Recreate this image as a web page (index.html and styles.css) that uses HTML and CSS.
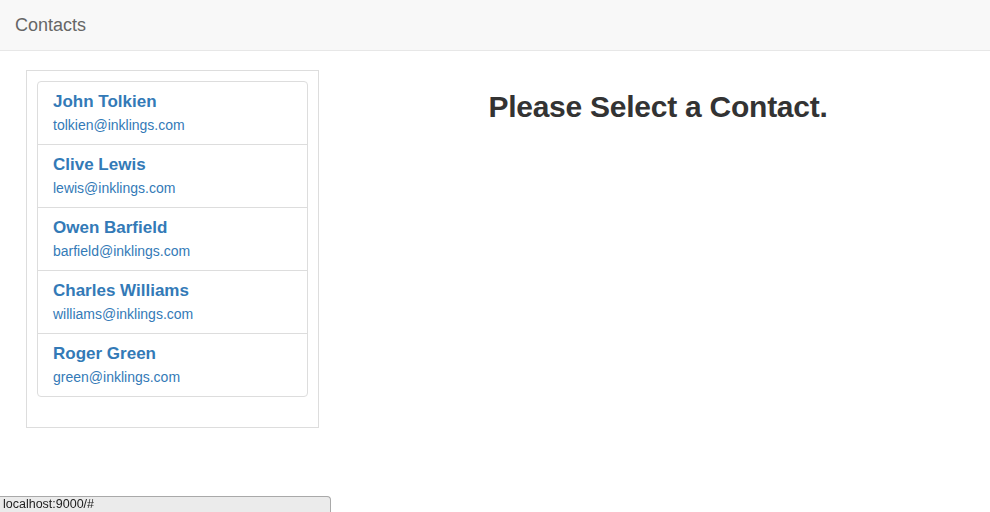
FILE: index.html
```html
<!DOCTYPE html>
<html>
<head>
<meta charset="utf-8">
<title>Contacts</title>
<link rel="stylesheet" href="styles.css">
</head>
<body>
<nav class="navbar">
  <a class="brand" href="#">Contacts</a>
</nav>
<div class="layout">
  <aside class="sidebar">
    <div class="list-group">
      <a class="list-item" href="#"><div class="name">John Tolkien</div><div class="email">tolkien@inklings.com</div></a>
      <a class="list-item" href="#"><div class="name">Clive Lewis</div><div class="email">lewis@inklings.com</div></a>
      <a class="list-item" href="#"><div class="name">Owen Barfield</div><div class="email">barfield@inklings.com</div></a>
      <a class="list-item" href="#"><div class="name">Charles Williams</div><div class="email">williams@inklings.com</div></a>
      <a class="list-item" href="#"><div class="name">Roger Green</div><div class="email">green@inklings.com</div></a>
    </div>
  </aside>
  <main class="main">
    <h2 class="title">Please Select a Contact.</h2>
  </main>
</div>
<div class="status">localhost:9000/#</div>
</body>
</html>
```
FILE: styles.css
```css
* { box-sizing: border-box; }
html, body { margin: 0; padding: 0; }
body {
  font-family: "Liberation Sans", Arial, sans-serif;
  font-size: 14px;
  line-height: 20px;
  color: #333;
  background: #fff;
}
.navbar {
  height: 51px;
  background: #f8f8f8;
  border-bottom: 1px solid #e7e7e7;
  display: flex;
  align-items: flex-start;
}
.brand {
  display: block;
  padding: 15px 15px;
  font-size: 18px;
  line-height: 20px;
  color: #666;
  text-decoration: none;
}
.layout {
  display: flex;
  align-items: flex-start;
  padding-top: 19px;
}
.sidebar {
  margin-left: 26px;
  width: 293px;
  border: 1px solid #ddd;
  padding: 10px 10px 30px 10px;
}
.list-group {
  border: 1px solid #ddd;
  border-radius: 4px;
  display: flex;
  flex-direction: column;
}
.list-item {
  display: block;
  padding: 10px 15px 9px 15px;
  border-top: 1px solid #ddd;
  text-decoration: none;
  color: #337ab7;
}
.list-item:first-child { border-top: 0; }
.name {
  font-size: 17px;
  font-weight: bold;
  line-height: 20px;
  margin-bottom: 3px;
}
.email {
  font-size: 14px;
  line-height: 20px;
}
.main {
  flex: 1;
  padding-left: 7px;
  text-align: center;
}
.title {
  margin: 20px 0 10px;
  font-size: 30px;
  font-weight: bold;
  line-height: 33px;
  letter-spacing: -0.25px;
  color: #333;
}
.status {
  position: fixed;
  left: 0;
  bottom: 0;
  width: 331px;
  height: 16px;
  background: #ebebeb;
  border: 1px solid #a9a9a9;
  border-left: 0;
  border-bottom: 0;
  border-top-right-radius: 4px;
  font-size: 12.5px;
  line-height: 15px;
  padding-left: 3px;
  color: #222;
}
```
